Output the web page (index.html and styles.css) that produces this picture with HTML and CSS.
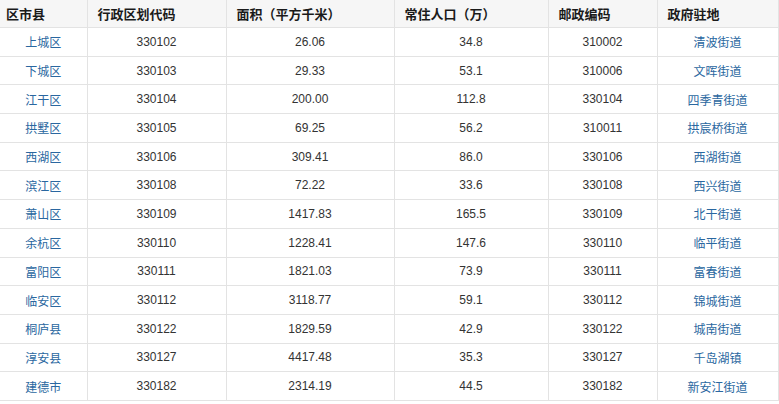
FILE: index.html
```html
<!DOCTYPE html>
<html lang="zh">
<head>
<meta charset="utf-8">
<link rel="stylesheet" href="styles.css">
</head>
<body>
<table class="data">
  <colgroup>
    <col class="c1"><col class="c2"><col class="c3"><col class="c4"><col class="c5"><col class="c6">
  </colgroup>
  <thead>
    <tr><th class="first">区市县</th><th>行政区划代码</th><th>面积（平方千米）</th><th>常住人口（万）</th><th>邮政编码</th><th>政府驻地</th></tr>
  </thead>
  <tbody>
    <tr><td class="link">上城区</td><td>330102</td><td>26.06</td><td>34.8</td><td>310002</td><td class="link">清波街道</td></tr>
    <tr><td class="link">下城区</td><td>330103</td><td>29.33</td><td>53.1</td><td>310006</td><td class="link">文晖街道</td></tr>
    <tr><td class="link">江干区</td><td>330104</td><td>200.00</td><td>112.8</td><td>330104</td><td class="link">四季青街道</td></tr>
    <tr><td class="link">拱墅区</td><td>330105</td><td>69.25</td><td>56.2</td><td>310011</td><td class="link">拱宸桥街道</td></tr>
    <tr><td class="link">西湖区</td><td>330106</td><td>309.41</td><td>86.0</td><td>330106</td><td class="link">西湖街道</td></tr>
    <tr><td class="link">滨江区</td><td>330108</td><td>72.22</td><td>33.6</td><td>330108</td><td class="link">西兴街道</td></tr>
    <tr><td class="link">萧山区</td><td>330109</td><td>1417.83</td><td>165.5</td><td>330109</td><td class="link">北干街道</td></tr>
    <tr><td class="link">余杭区</td><td>330110</td><td>1228.41</td><td>147.6</td><td>330110</td><td class="link">临平街道</td></tr>
    <tr><td class="link">富阳区</td><td>330111</td><td>1821.03</td><td>73.9</td><td>330111</td><td class="link">富春街道</td></tr>
    <tr><td class="link">临安区</td><td>330112</td><td>3118.77</td><td>59.1</td><td>330112</td><td class="link">锦城街道</td></tr>
    <tr><td class="link">桐庐县</td><td>330122</td><td>1829.59</td><td>42.9</td><td>330122</td><td class="link">城南街道</td></tr>
    <tr><td class="link">淳安县</td><td>330127</td><td>4417.48</td><td>35.3</td><td>330127</td><td class="link">千岛湖镇</td></tr>
    <tr><td class="link">建德市</td><td>330182</td><td>2314.19</td><td>44.5</td><td>330182</td><td class="link">新安江街道</td></tr>
  </tbody>
</table>
</body>
</html>
```
FILE: styles.css
```css
html, body {
  margin: 0;
  padding: 0;
  background: #ffffff;
}
.data {
  border-collapse: collapse;
  table-layout: fixed;
  width: 778px;
  font-family: "Liberation Sans", Arial, sans-serif;
  font-size: 12px;
  color: #333333;
}
.c1 { width: 87px; }
.c2 { width: 139px; }
.c3 { width: 168px; }
.c4 { width: 154px; }
.c5 { width: 109px; }
.c6 { width: 121px; }
.data th, .data td {
  border: 1px solid #e3e3e3;
  padding: 0;
}
.data th {
  height: 27px;
  background: #f6f6f6;
  text-align: left;
  padding-left: 10px;
  font-family: "Noto Sans CJK SC", sans-serif;
  font-size: 13px;
  font-weight: bold;
  color: #1a1a1a;
  border-top: none;
}
.data th.first {
  padding-left: 6px;
  border-left: none;
}
.data td {
  height: 27.7px;
  text-align: center;
}
.data td:first-child {
  border-left: none;
}
.data td.link {
  font-family: "Noto Sans CJK SC", sans-serif;
  color: #2a67a0;
}
```
